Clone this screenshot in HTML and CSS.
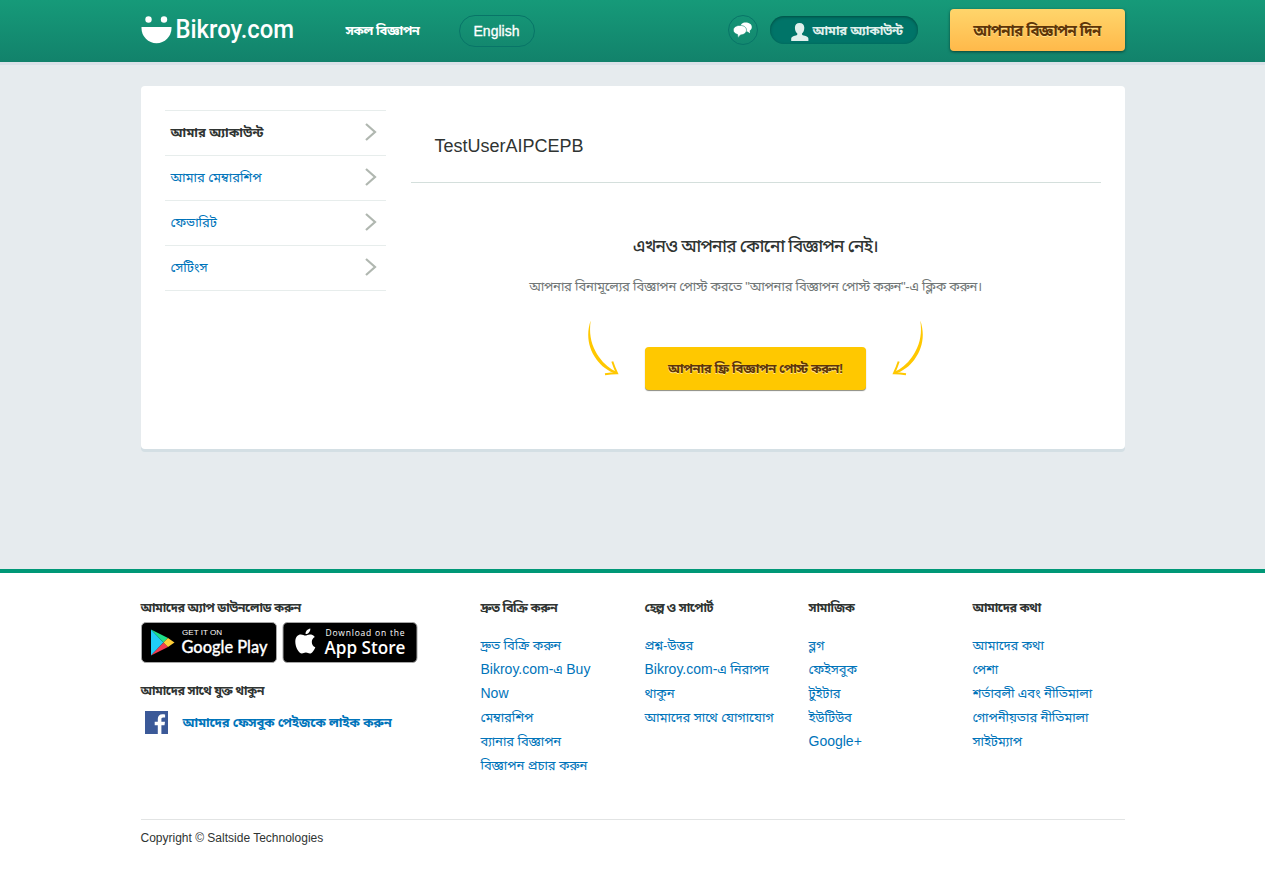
FILE: index.html
```html
<!DOCTYPE html>
<html lang="bn">
<head>
<meta charset="utf-8">
<title>Bikroy.com</title>
<link rel="stylesheet" href="styles.css">
</head>
<body>
<header class="topbar">
  <div class="container topbar-inner">
    <a class="logo">
      <svg width="158" height="32" viewBox="0 0 158 32">
        <circle cx="7.500" cy="3.500" r="3.200" fill="#fff"/><circle cx="23" cy="3.500" r="3.200" fill="#fff"/>
        <path d="M.5 11h30v1a15 15.300 0 0 1-30 0z" fill="#fff"/>
        <text class="logo-text" x="34.500" y="22" textLength="118.500" lengthAdjust="spacingAndGlyphs">Bikroy.com</text>
      </svg>
    </a>
    <a class="nav-all">সকল বিজ্ঞাপন</a>
    <a class="lang">English</a>
    <a class="chat">
      <svg width="20" height="16" viewBox="0 0 20 16" fill="#fff">
        <path d="M12.500.5c3.500 0 6.300 1.700 6.300 4.500 0 1.700-.9 3-2.100 3.700l.3 2.600-2.700-1.700c-3.800.2-7-1.700-7-4.500C7.300 2.400 9.500.5 12.500.5z"/>
        <path d="M7 3.400c4 0 6.500 2 6.500 4.700S10.900 12.900 7.500 12.900L5 15.800 4.600 12.500C2 11.800.3 10.300.3 8.100c0-2.800 2.900-4.700 6.700-4.700z" stroke="#138a70" stroke-width=".6"/>
      </svg>
    </a>
    <a class="account">
      <svg width="18" height="18" viewBox="0 0 18 18" fill="#e0f0ed">
        <path d="M8.500 0c3 0 4.800 1.800 4.800 4.700 0 2.400-.9 4.700-2.300 5.900-.2 1.200.3 1.600 1.700 2 3 .8 4.600 1.300 4.700 2.900V18H.2v-2.500c.1-1.600 1.600-2.100 4.600-2.900 1.400-.4 1.700-.8 1.500-2C4.900 9.400 3.900 7.100 3.900 4.700 3.900 1.800 5.600 0 8.500 0z"/>
      </svg>
      <span>আমার অ্যাকাউন্ট</span>
    </a>
    <a class="post-top">আপনার বিজ্ঞাপন দিন</a>
  </div>
</header>
<main class="page">
  <section class="container card">
    <nav class="side">
      <a class="side-item active">আমার অ্যাকাউন্ট<svg width="12" height="18" viewBox="0 0 12 18"><path d="M1 1l9 8-9 8"/></svg></a>
      <a class="side-item">আমার মেম্বারশিপ<svg width="12" height="18" viewBox="0 0 12 18"><path d="M1 1l9 8-9 8"/></svg></a>
      <a class="side-item">ফেভারিট<svg width="12" height="18" viewBox="0 0 12 18"><path d="M1 1l9 8-9 8"/></svg></a>
      <a class="side-item">সেটিংস<svg width="12" height="18" viewBox="0 0 12 18"><path d="M1 1l9 8-9 8"/></svg></a>
    </nav>
    <div class="content">
      <h1 class="user">TestUserAIPCEPB</h1>
      <h2 class="empty-title">এখনও আপনার কোনো বিজ্ঞাপন নেই।</h2>
      <p class="empty-text">আপনার বিনামূল্যের বিজ্ঞাপন পোস্ট করতে "আপনার বিজ্ঞাপন পোস্ট করুন"-এ ক্লিক করুন।</p>
      <div class="cta-row">
        <svg class="arrow" width="32" height="56" viewBox="0 0 32 56"><path d="M3.700.5C1.500 16 5 27 12 37c5 7 11 12 18 15l-1 2C21 51 14 46 9.500 39.500 1 28-1 14 3.700.5z"/><path class="tip" d="M25.300 41.500q2 6 4.700 11.700-6 .1-12 1"/></svg>
        <a class="cta">আপনার ফ্রি বিজ্ঞাপন পোস্ট করুন!</a>
        <svg class="arrow flip" width="32" height="56" viewBox="0 0 32 56"><path d="M3.700.5C1.500 16 5 27 12 37c5 7 11 12 18 15l-1 2C21 51 14 46 9.500 39.500 1 28-1 14 3.700.5z"/><path class="tip" d="M25.300 41.500q2 6 4.700 11.700-6 .1-12 1"/></svg>
      </div>
    </div>
  </section>
</main>
<footer class="footer">
  <div class="container cols">
    <div class="apps">
      <h3 class="head">আমাদের অ্যাপ ডাউনলোড করুন</h3>
      <div class="badges">
        <svg width="137" height="41" viewBox="0 0 137 41">
          <rect x=".5" y=".5" width="135" height="40" rx="4.500" fill="#000" stroke="#a6a6a6"/>
          <path d="M10 7.500v26L22.500 20.500z" fill="#20cdf6"/>
          <path d="M10 7.500L22.500 20.500l4.500-4.500z" fill="#1fe08a"/>
          <path d="M10 33.500L22.500 20.500l4.500 4.500z" fill="#f43b50"/>
          <path d="M27 16l-4.500 4.500L27 25l6.500-4.500z" fill="#ffce38"/>
          <text class="badge-small" x="41" y="13" textLength="40" lengthAdjust="spacingAndGlyphs">GET IT ON</text>
          <text class="badge-google" x="40.500" y="31" textLength="86" lengthAdjust="spacingAndGlyphs">Google Play</text>
        </svg>
        <svg width="137" height="41" viewBox="0 0 137 41">
          <rect x="1" y=".5" width="134" height="40" rx="4.500" fill="#000" stroke="#a6a6a6"/>
          <path transform="translate(12.500 6.500)" fill="#fff" d="M17.300 13.400c0-2.500 1.300-4 3-5C19 6.500 17 5.900 15.500 5.900c-2 0-3.500 1.200-4.600 1.200S8.200 6 6.300 6C3.500 6 .8 8.400.8 13.200c0 5.600 3.700 11.900 6.600 11.900 1.500 0 2.100-1 4-1 1.800 0 2.400 1 3.900 1 2.400 0 4.700-4.200 5.500-6.400-2.200-.9-3.500-2.800-3.500-5.300zM14.400 4C15.600 2.700 16 1.200 15.800 0c-2.600.4-5 2.700-4.700 5.600 1.300 0 2.500-.7 3.300-1.600z"/>
          <text class="badge-dl" x="43.500" y="13.500" textLength="79" lengthAdjust="spacing">Download on the</text>
          <text class="badge-app" x="42.500" y="31.500" textLength="81" lengthAdjust="spacingAndGlyphs">App Store</text>
        </svg>
      </div>
      <h3 class="head follow">আমাদের সাথে যুক্ত থাকুন</h3>
      <a class="fb">
        <svg width="23" height="23" viewBox="0 0 23 23"><rect width="23" height="23" fill="#3b5998"/><path d="M12.800 23v-8.700H9.700v-3.500h3.100V8c0-3.100 1.800-4.800 4.600-4.800 1.300 0 2.300.1 2.700.2v3.200h-1.900c-1.500 0-1.800.7-1.800 1.800v2.400H20l-.5 3.500h-3.100V23z" fill="#fff"/></svg>
        <span>আমাদের ফেসবুক পেইজকে লাইক করুন</span>
      </a>
    </div>
    <div class="col">
      <h3 class="head">দ্রুত বিক্রি করুন</h3>
      <ul class="links"><li>দ্রুত বিক্রি করুন</li><li><span class="en">Bikroy.com-</span>এ <span class="en">Buy<br>Now</span></li><li>মেম্বারশিপ</li><li>ব্যানার বিজ্ঞাপন</li><li>বিজ্ঞাপন প্রচার করুন</li></ul>
    </div>
    <div class="col">
      <h3 class="head">হেল্প ও সাপোর্ট</h3>
      <ul class="links"><li>প্রশ্ন-উত্তর</li><li><span class="en">Bikroy.com-</span>এ নিরাপদ<br>থাকুন</li><li>আমাদের সাথে যোগাযোগ</li></ul>
    </div>
    <div class="col">
      <h3 class="head">সামাজিক</h3>
      <ul class="links"><li>ব্লগ</li><li>ফেইসবুক</li><li>টুইটার</li><li>ইউটিউব</li><li><span class="en">Google+</span></li></ul>
    </div>
    <div class="col">
      <h3 class="head">আমাদের কথা</h3>
      <ul class="links"><li>আমাদের কথা</li><li>পেশা</li><li>শর্তাবলী এবং নীতিমালা</li><li>গোপনীয়তার নীতিমালা</li><li>সাইটম্যাপ</li></ul>
    </div>
  </div>
  <div class="container copy">Copyright © Saltside Technologies</div>
</footer>
</body>
</html>
```
FILE: styles.css
```css
* { box-sizing: border-box; }
body {
  margin: 0;
  background: #fff;
  color: #2f3432;
  font: 14px/24px "Liberation Sans", Arial, "Noto Sans Bengali", sans-serif;
  white-space: nowrap;
}
h1, h2, h3, p, ul { margin: 0; padding: 0; }
ul { list-style: none; }
svg { display: block; flex: none; }
.container { width: 984px; margin: 0 auto; }

.topbar { height: 62px; background: linear-gradient(#169a79, #12826b); color: #fff; }
.topbar-inner { display: flex; align-items: flex-start; height: 62px; }
.topbar-inner > * { flex: none; }
.logo { width: 205px; padding-top: 16px; }
.logo-text { font: 500 25px Roboto, sans-serif; fill: #fff; }
.nav-all { width: 113px; padding-top: 19px; font-size: 13px; font-weight: bold; letter-spacing: -.5px; }
.lang {
  width: 76px; height: 32px; margin-top: 15px;
  border: 1px solid #087568; border-radius: 16px;
  line-height: 30px; text-align: center; -webkit-text-stroke: .3px #fff;
}
.chat {
  display: grid; place-items: center;
  width: 30px; height: 30px; margin: 15px 0 0 193px;
  border: 1px solid #087568; border-radius: 50%;
}
.account {
  display: flex; align-items: center; gap: 4px;
  width: 148px; height: 28px; margin: 16px 0 0 12px; padding-left: 21px;
  border-radius: 14px; background: #007468; color: #e0f0ed;
  font-size: 13px; font-weight: bold; letter-spacing: -.3px;
  box-shadow: inset 0 1px 3px rgba(0,50,40,.6);
}
.account svg { margin-top: 3px; }
.account span { margin-top: 1px; }
.post-top {
  width: 175px; height: 42px; margin: 9px 0 0 auto;
  border-radius: 4px; background: linear-gradient(#ffd56b, #ffb94a);
  box-shadow: 0 1px 3px rgba(0,0,0,.5);
  color: #5e3508; font-size: 15px; font-weight: bold; letter-spacing: -.6px; line-height: 43px; text-align: center;
  text-shadow: 0 1px 0 #ffe08c;
}

.page { height: 507px; padding-top: 21px; background: #e6ebee; border-top: 3px solid #dae1e8; }
.card {
  display: flex; gap: 25px; height: 363px; padding: 24px;
  border-radius: 4px; background: #fff; box-shadow: 0 3px 0 #d4dfe4;
}
.side { width: 221px; }
.side-item {
  display: flex; align-items: center; justify-content: space-between;
  height: 45px; padding: 0 9px 0 6px; border-top: 1px solid #e7edec; color: #0074ba; font-size: 13px;
}
.side-item:last-child { height: 46px; border-bottom: 1px solid #e7edec; }
.side-item svg { fill: none; stroke: #b0b7b0; stroke-width: 2.200; margin-top: -3px; }
.side-item.active { color: #2f3432; font-weight: bold; }
.content { width: 690px; text-align: center; }
.user {
  height: 73px; padding: 24px 24px 0; border-bottom: 1px solid #d4dfdc;
  font-size: 18px; font-weight: normal; text-align: left;
}
.empty-title { margin-top: 52px; font-size: 17px; font-weight: 500; letter-spacing: -.7px; }
.empty-text { margin-top: 16px; color: #707676; font-size: 13px; letter-spacing: -.25px; }
.cta-row { display: flex; justify-content: center; gap: 26px; margin-top: 22px; }
.cta {
  width: 221px; height: 43px; margin-top: 26px; border-radius: 4px;
  background: #ffc800; box-shadow: 0 1px 1px #8b8b80;
  color: #5e3508; font-size: 13px; font-weight: bold; letter-spacing: -.4px; line-height: 43px; text-shadow: 0 1px 0 #ffe58c;
}
.arrow { fill: #ffc800; margin-top: -1px; }
.tip { fill: none; stroke: #ffc800; stroke-width: 2; }
.flip { transform: scaleX(-1); }

.footer { height: 314px; border-top: 4px solid #009877; }
.cols { display: flex; height: 246px; padding-top: 23px; }
.apps { flex: none; width: 340px; }
.col { flex: none; width: 164px; }
.col:last-child { width: 152px; }
.head { font-size: 12.5px; font-weight: bold; line-height: 24px; letter-spacing: -.5px; }
.badges { display: flex; gap: 4px; margin-top: 2px; }
.badge-small { font: 8px "Liberation Sans", sans-serif; fill: #fff; }
.badge-google { font: 500 17px Lato, sans-serif; fill: #fff; stroke: #fff; stroke-width: .3px; }
.badge-dl { font: 500 8.500px "Open Sans", sans-serif; fill: #fff; }
.badge-app { font: 600 17.500px "Open Sans", sans-serif; fill: #fff; }
.follow { margin-top: 16px; }
.fb { display: flex; align-items: center; gap: 15px; height: 23px; margin: 8px 0 0 4px; color: #0074ba; font-size: 13px; font-weight: bold; letter-spacing: -.25px; }
.links { margin-top: 14px; color: #0074ba; font-size: 13px; letter-spacing: -.1px; }
.en { font-size: 14px; letter-spacing: 0; line-height: 1; }
.copy { border-top: 1px solid #e2e4e4; padding-top: 6px; font-size: 12px; }
```
